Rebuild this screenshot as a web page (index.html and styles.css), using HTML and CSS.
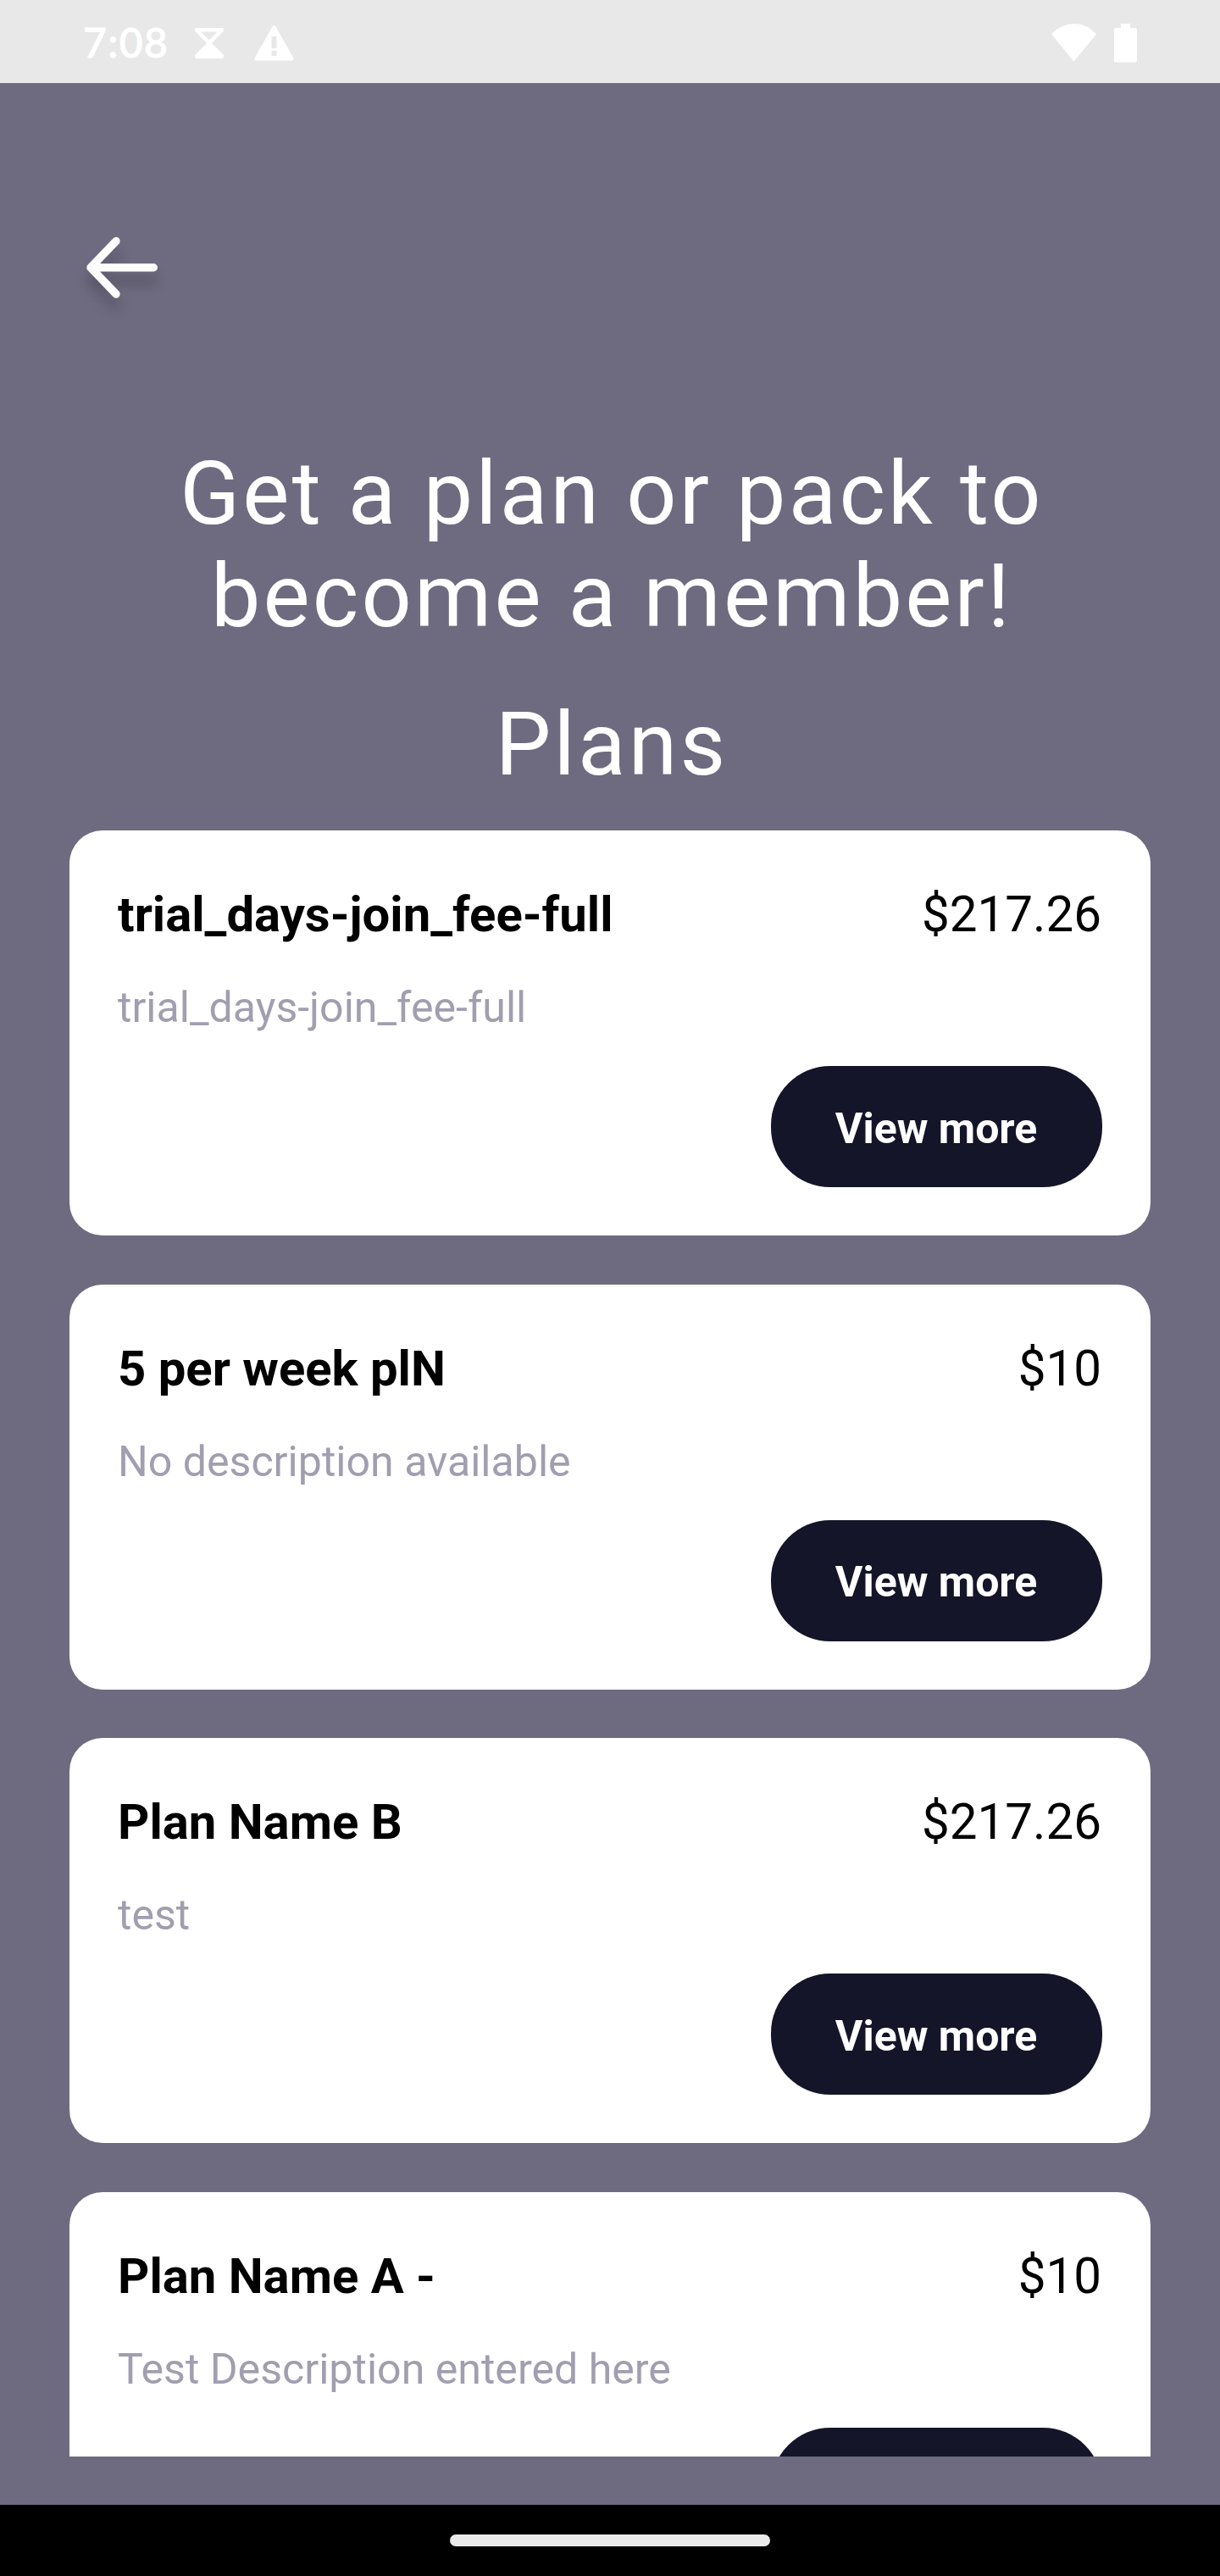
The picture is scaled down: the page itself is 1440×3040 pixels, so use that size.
FILE: index.html
```
<!DOCTYPE html>
<html lang="en">
<head>
  <meta charset="UTF-8">
  <meta name="viewport" content="width=device-width, initial-scale=1.0">
  <title>Plans</title>
  <link rel="stylesheet" href="styles.css">
</head>
<body>
  <div class="status-bar">
    <span class="time">7:08</span>
    <svg class="icon-hourglass" width="34" height="36" viewBox="0 0 34 36">
      <path fill="#fff" fill-rule="evenodd" d="M2 0H32Q34 0 34 2V3.5L20 18L34 32V34Q34 36 32 36H2Q0 36 0 34V32L14 18L0 3.5V2Q0 0 2 0ZM7.5 4.5L17 14.5L26.5 4.5Z"/>
    </svg>
    <svg class="icon-warning" width="47" height="42" viewBox="0 0 47 42">
      <path fill="#fff" fill-rule="evenodd" d="M21.6 1.2Q23.5 -1 25.4 1.2L46.3 38.3Q47.3 41.2 45 41.4H2Q-.3 41.2 .7 38.3ZM20.5 13H26.5V27H20.5ZM20.5 30H26.5V36H20.5Z"/>
    </svg>
    <div class="status-right">
      <svg width="53" height="45" viewBox="0 0 53 45">
        <path fill="#fff" d="M0 12.3Q11.5 0 26.5 0T53 12.3L26.5 44.5Z"/>
      </svg>
      <svg width="27" height="46" viewBox="0 0 27 46">
        <path fill="#fff" d="M8 0H19V5H25Q27 5 27 7V43.5Q27 45.5 25 45.5H2Q0 45.5 0 43.5V7Q0 5 2 5H8Z"/>
      </svg>
    </div>
  </div>

  <div class="screen">
    <a class="back" href="#">
      <svg width="90" height="80" viewBox="0 0 90 80">
        <path fill="none" stroke="#fdfdfd" stroke-width="9.4" stroke-linecap="round" stroke-linejoin="round" d="M37 8.5L7 39.7L37 71M7 39.7H81.3"/>
      </svg>
    </a>
    <h1>Get a plan or pack to<br>become a member!</h1>
    <h2>Plans</h2>

    <div class="plans">
      <div class="card">
        <div class="card-header">
          <h3>trial_days-join_fee-full</h3>
          <span class="price">$217.26</span>
        </div>
        <p>trial_days-join_fee-full</p>
        <button>View more</button>
      </div>
      <div class="card">
        <div class="card-header">
          <h3>5 per week plN</h3>
          <span class="price">$10</span>
        </div>
        <p>No description available</p>
        <button>View more</button>
      </div>
      <div class="card">
        <div class="card-header">
          <h3>Plan Name B</h3>
          <span class="price">$217.26</span>
        </div>
        <p>test</p>
        <button>View more</button>
      </div>
      <div class="card">
        <div class="card-header">
          <h3>Plan Name A -</h3>
          <span class="price">$10</span>
        </div>
        <p>Test Description entered here</p>
        <button></button>
      </div>
    </div>
  </div>

  <div class="nav-bar">
    <div class="home-handle"></div>
  </div>
</body>
</html>
```
FILE: styles.css
```
:root {
  --bg: #6e6b80;
  --card: #ffffff;
  --dark: #151529;
  --muted: #a19eb0;
}

* {
  box-sizing: border-box;
}

body {
  margin: 0;
  height: 3040px;
  display: flex;
  flex-direction: column;
  font-family: Roboto, sans-serif;
  background-color: var(--bg);
  overflow: hidden;
}

h1, h2, h3, p {
  margin: 0;
  font-weight: 400;
}

svg {
  display: block;
}

/* Status bar */
.status-bar {
  display: flex;
  align-items: center;
  height: 98px;
  padding: 4px 98px 0 98px;
  background-color: #e8e8e8;
}

.time {
  width: 132px;
  font-family: Lato, sans-serif;
  font-size: 48px;
  font-weight: 500;
  letter-spacing: 1.4px;
  line-height: 56px;
  padding-bottom: 2px;
  color: #fff;
  -webkit-text-stroke: 1px #fff;
}

.icon-warning {
  margin-left: 36px;
}

.status-right {
  display: flex;
  gap: 21px;
  margin-left: auto;
}

/* Screen content */
.screen {
  flex: 1;
  min-height: 0;
  display: flex;
  flex-direction: column;
  padding: 178px 82px 57px;
}

.back {
  width: 90px;
  margin-left: 18px;
}

.back svg {
  overflow: visible;
  filter: drop-shadow(0 15px 7px rgba(0, 0, 0, 0.2));
}

h1, h2 {
  padding-left: 4px;
  font-size: 104px;
  line-height: 121px;
  letter-spacing: 3.2px;
  text-align: center;
  color: #fff;
}

h1 {
  margin-top: 166px;
}

h2 {
  margin-top: 54px;
}

.plans {
  flex: 1;
  min-height: 0;
  display: flex;
  flex-direction: column;
  gap: 57.67px;
  margin-top: 41px;
  overflow: hidden;
}

.card {
  flex: none;
  height: 478px;
  padding: 65px 57px 57px;
  display: flex;
  flex-direction: column;
  background-color: var(--card);
  border-radius: 39px;
}

.card-header {
  display: flex;
  justify-content: space-between;
  line-height: 68px;
  color: #000;
}

.card h3 {
  font-size: 58px;
  font-weight: 700;
}

.price {
  padding-right: 1px;
  font-size: 58.3px;
}

.card p {
  margin-top: 47px;
  font-size: 50.1px;
  line-height: 59px;
  color: var(--muted);
}

.card button {
  width: 391px;
  height: 143px;
  margin-top: auto;
  align-self: flex-end;
  padding: 4px 1px 0 0;
  border: none;
  border-radius: 70px;
  background-color: var(--dark);
  color: #fff;
  font-family: inherit;
  font-size: 50px;
  font-weight: 700;
}

/* Gesture navigation */
.nav-bar {
  display: flex;
  align-items: center;
  justify-content: center;
  height: 84px;
  background-color: #000;
}

.home-handle {
  width: 378px;
  height: 14px;
  border-radius: 7px;
  background-color: #ebebeb;
}
```
